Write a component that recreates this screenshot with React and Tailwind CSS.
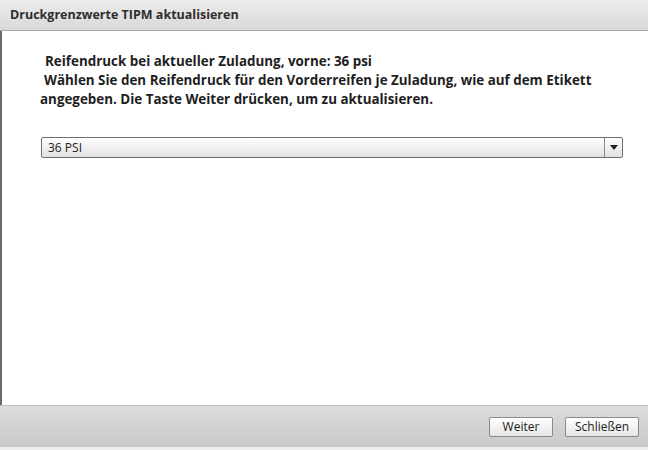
import { useState } from "react";

export default function App() {
  const [value, setValue] = useState("36 PSI");

  return (
    <div className="h-[450px] w-[648px] flex flex-col bg-white overflow-hidden" style={{ fontFamily: '"Open Sans", "DejaVu Sans", sans-serif' }}>
      <div className="h-[31px] shrink-0 flex items-center px-[10px] bg-gradient-to-b from-[#ececec] to-[#d9d9d9] border-b border-[#a8a8a8]">
        <span className="text-[12.5px] font-bold text-[#2e2e2e]">Druckgrenzwerte TIPM aktualisieren</span>
      </div>

      <div className="flex-1 flex flex-col border-l-2 border-[#6a6a6a] pl-[38px] pr-[24px] pt-[21px]">
        <div className="text-[13.4px] font-bold leading-[19px] text-[#1e1e1e]">
          <p className="pl-[5px]">Reifendruck bei aktueller Zuladung, vorne: 36 psi</p>
          <p className="pl-[4px]">Wählen Sie den Reifendruck für den Vorderreifen je Zuladung, wie auf dem Etikett</p>
          <p>angegeben. Die Taste Weiter drücken, um zu aktualisieren.</p>
        </div>

        <div className="mt-[28px] ml-[1px] w-[582px] h-[21px] flex border border-[#6e6e6e] rounded-[2px] bg-gradient-to-b from-white to-[#e2e2e2]">
          <div className="flex-1 flex items-center pl-[6px] text-[12px] text-[#222]">{value}</div>
          <button
            onClick={() => setValue("36 PSI")}
            className="w-[18px] flex items-center justify-center border-l border-[#8a8a8a]"
          >
            <svg width="8" height="5" viewBox="0 0 8 5">
              <path d="M0 0 H8 L4 5 Z" fill="#222" />
            </svg>
          </button>
        </div>
      </div>

      <div className="h-[45px] shrink-0 flex items-start justify-end gap-[12px] pt-[11px] pr-[9px] border-t border-[#bdbdbd] bg-gradient-to-b from-[#dcdcdc] to-[#c9c9c9] border-b-[3px] border-b-[#eeeeee]">
        <button className="w-[64px] h-[20px] text-[12px] text-[#222] border border-[#8a8a8a] rounded-[2px] bg-gradient-to-b from-white to-[#e6e6e6]">
          Weiter
        </button>
        <button className="w-[74px] h-[20px] text-[12px] text-[#222] border border-[#8a8a8a] rounded-[2px] bg-gradient-to-b from-white to-[#e6e6e6]">
          Schließen
        </button>
      </div>
    </div>
  );
}
